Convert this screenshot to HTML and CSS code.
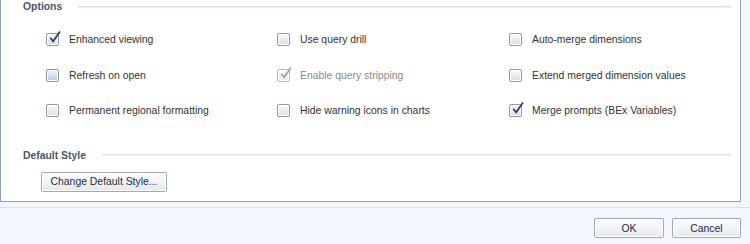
FILE: index.html
```html
<!DOCTYPE html>
<html lang="en">
<head>
    <meta charset="UTF-8">
    <title>Options</title>
    <link rel="stylesheet" href="styles.css">
</head>
<body>

    <div class="panel">
        <div class="group-head">
            <span class="group-title">Options</span>
            <span class="rule"></span>
        </div>

        <div class="options">
            <label class="opt"><span class="box checked"><svg viewBox="0 0 16 16"><path d="M3.5 8.2 L6.6 12 L13.8 1.6" /></svg></span>Enhanced viewing</label>
            <label class="opt"><span class="box"></span>Use query drill</label>
            <label class="opt"><span class="box"></span>Auto-merge dimensions</label>

            <label class="opt"><span class="box focus"></span>Refresh on open</label>
            <label class="opt disabled"><span class="box checked"><svg viewBox="0 0 16 16"><path d="M3.5 8.2 L6.6 12 L13.8 1.6" /></svg></span>Enable query stripping</label>
            <label class="opt"><span class="box"></span>Extend merged dimension values</label>

            <label class="opt"><span class="box"></span>Permanent regional formatting</label>
            <label class="opt"><span class="box"></span>Hide warning icons in charts</label>
            <label class="opt"><span class="box checked"><svg viewBox="0 0 16 16"><path d="M3.5 8.2 L6.6 12 L13.8 1.6" /></svg></span>Merge prompts (BEx Variables)</label>
        </div>

        <div class="group-head style-head">
            <span class="group-title">Default Style</span>
            <span class="rule"></span>
        </div>

        <div class="style-row">
            <button class="btn wide">Change Default Style...</button>
        </div>
    </div>

    <div class="footer">
        <button class="btn ok">OK</button>
        <button class="btn cancel">Cancel</button>
    </div>

</body>
</html>
```

FILE: styles.css
```css
body {
    margin: 0;
    padding: 0;
    background-color: #f3f6fc;
    font-family: 'Liberation Sans', Arial, sans-serif;
    font-size: 10.4px;
    color: #333;
}

.panel {
    box-sizing: border-box;
    width: 741px;
    height: 202px;
    background-color: #fff;
    border-left: 1px solid #8fa2bd;
    border-right: 1px solid #8fa2bd;
    border-bottom: 1px solid #8fa2bd;
}

.group-head {
    display: flex;
    align-items: center;
    height: 13px;
    padding-left: 22px;
    padding-right: 9px;
}

.group-title {
    font-weight: bold;
    color: #4b5668;
    font-size: 10.4px;
    line-height: 13px;
}

.rule {
    flex: 1;
    margin-left: 16px;
    border-top: 1px solid #dde0e8;
    border-bottom: 1px solid #eff1f5;
}

.options {
    display: grid;
    grid-template-columns: 231px 232px 1fr;
    grid-auto-rows: 35.5px;
    margin-top: 9px;
    padding-left: 45px;
}

.opt {
    display: flex;
    align-items: center;
    gap: 10px;
    color: #333;
}

.opt.disabled {
    color: #8a8a8a;
}

.box {
    position: relative;
    box-sizing: border-box;
    width: 13px;
    height: 13px;
    border: 1px solid #8e99aa;
    border-radius: 2px;
    background: linear-gradient(#fbfbfb, #dcdcdc);
    box-shadow: inset 0 0 0 1px #fff;
}

.box.focus {
    background: linear-gradient(#f2f5fa, #b9cde6);
    border-color: #8797ad;
}

.box.checked {
    background: linear-gradient(#f5f7fa, #d3dbe6);
}

.box svg {
    position: absolute;
    left: 0;
    top: -4px;
    width: 15px;
    height: 15px;
}

.box svg path {
    fill: none;
    stroke: #2e3b55;
    stroke-width: 1.8;
}

.disabled .box {
    border-color: #b5bcc6;
    background: linear-gradient(#fbfbfb, #e8ebef);
}

.disabled .box svg path {
    stroke: #9aa4b2;
}

.style-head {
    margin-top: 20px;
}

.style-row {
    margin-top: 10px;
    padding-left: 40px;
}

.btn {
    box-sizing: border-box;
    height: 20px;
    padding: 0;
    white-space: nowrap;
    font-family: 'Liberation Sans', Arial, sans-serif;
    font-size: 10.4px;
    color: #1f2b40;
    border: 1px solid #9ba9bd;
    border-radius: 2px;
    background: linear-gradient(#fdfdfe, #e4e9f0);
    box-shadow: inset 0 0 0 1px #fff;
}

.btn.wide {
    width: 126px;
}

.footer {
    display: flex;
    justify-content: flex-end;
    gap: 8px;
    margin-top: 5px;
    padding: 10px 9px 0 0;
    border-top: 1px solid #dbdfe6;
}

.btn.ok {
    width: 70px;
}

.btn.cancel {
    width: 69px;
}
```
